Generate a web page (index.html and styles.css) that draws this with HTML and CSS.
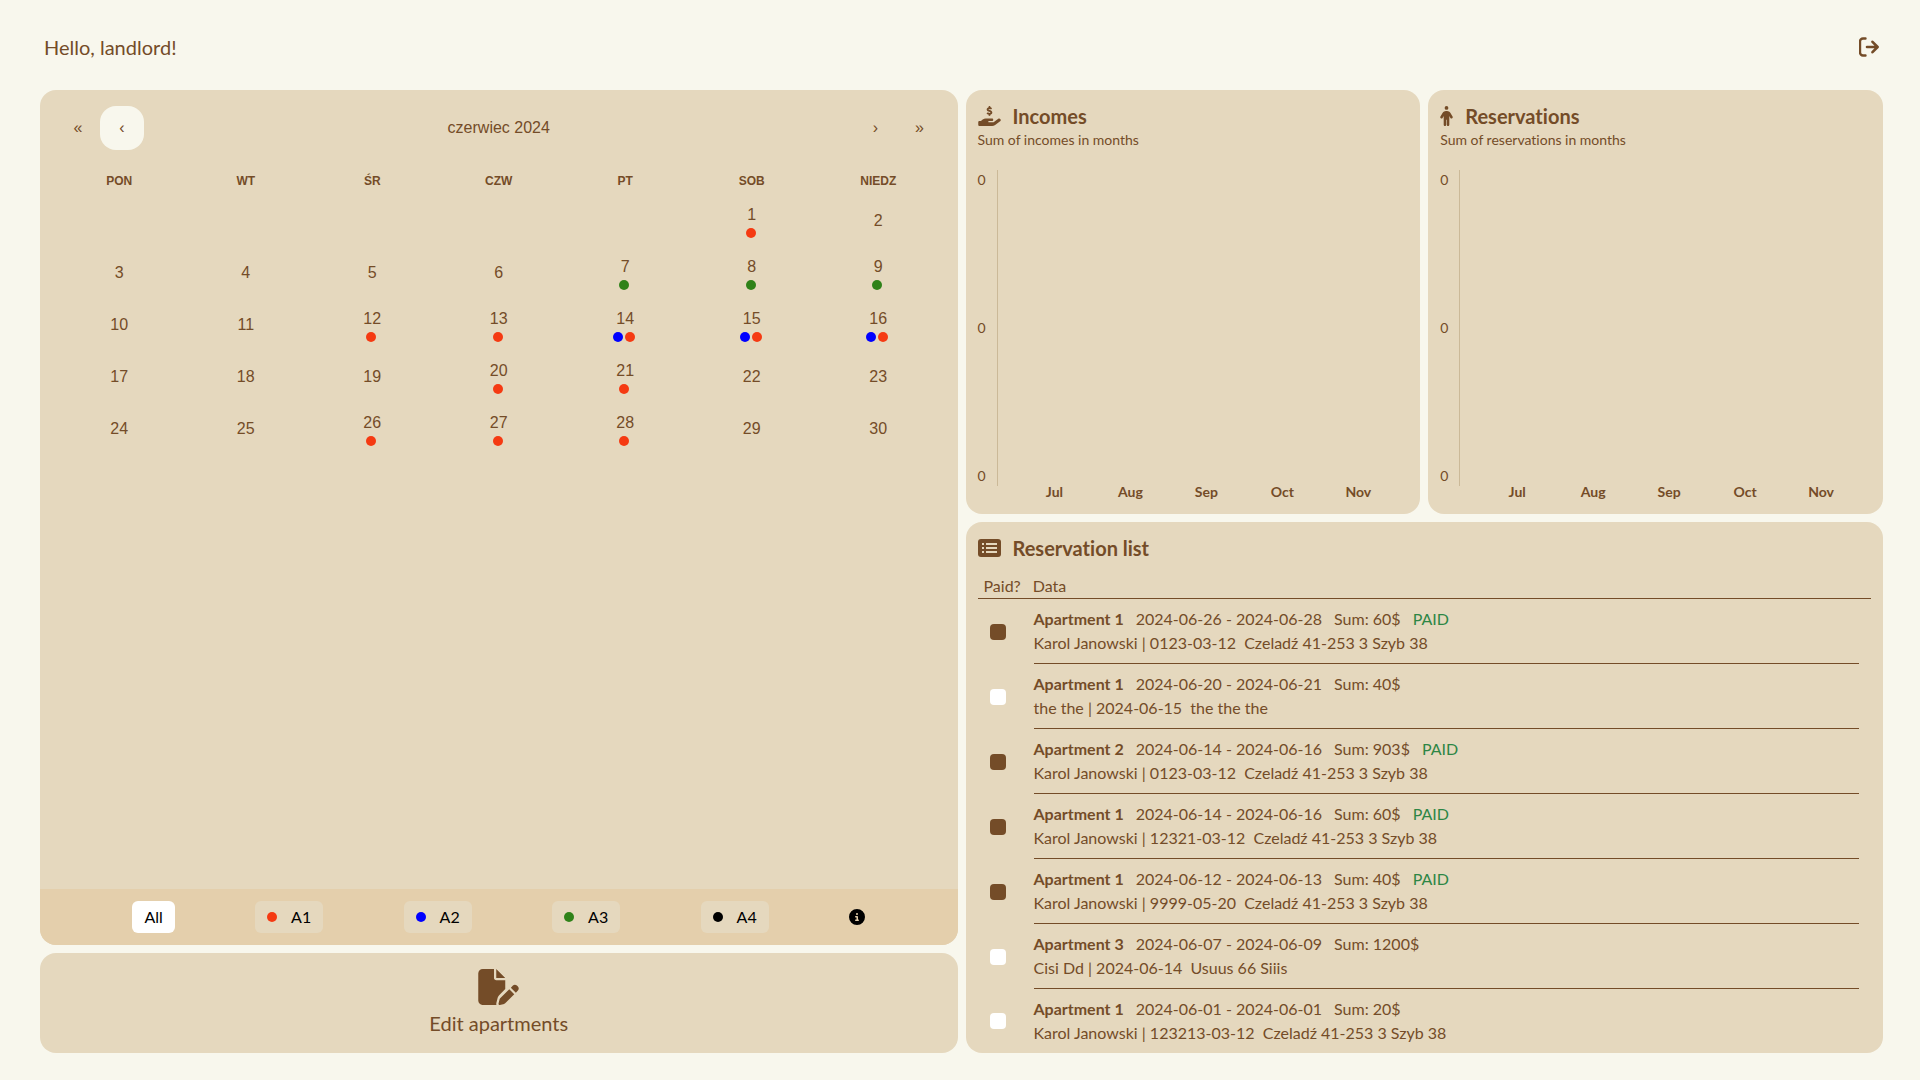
FILE: index.html
```html
<!DOCTYPE html>
<html lang="pl">
<head>
<meta charset="utf-8">
<meta name="viewport" content="width=device-width, initial-scale=1">
<title>Landlord panel</title>
<link rel="stylesheet" href="styles.css">
</head>
<body>
<header class="topbar">
  <h1 class="greeting">Hello, landlord!</h1>
  <button class="icon-button" type="button" aria-label="Log out">
    <svg class="icon-logout" viewBox="0 0 20 20" fill="none" stroke="currentColor" stroke-linecap="round" stroke-linejoin="round"><path stroke-width="2.400" d="M6.500 1.500H4a3 3 0 0 0-3 3v11a3 3 0 0 0 3 3h2.500"/><path stroke-width="2.6" d="M8 10h10.500M13.500 4.800 18.600 10l-5.100 5.200"/></svg>
  </button>
</header>
<main class="dashboard">
  <div class="column column-left">
    <section class="card calendar-card">
      <div class="calendar">
        <div class="calendar-nav">
          <button type="button" class="nav-button">«</button>
          <button type="button" class="nav-button nav-active">‹</button>
          <button type="button" class="nav-label">czerwiec 2024</button>
          <button type="button" class="nav-button">›</button>
          <button type="button" class="nav-button">»</button>
        </div>
        <table class="month">
          <thead><tr><th>pon</th><th>wt</th><th>śr</th><th>czw</th><th>pt</th><th>sob</th><th>niedz</th></tr></thead>
          <tbody>
            <tr><td></td><td></td><td></td><td></td><td></td><td>1<span class="dots"><i class="dot red"></i></span></td><td>2</td></tr>
            <tr><td>3</td><td>4</td><td>5</td><td>6</td><td>7<span class="dots"><i class="dot green"></i></span></td><td>8<span class="dots"><i class="dot green"></i></span></td><td>9<span class="dots"><i class="dot green"></i></span></td></tr>
            <tr><td>10</td><td>11</td><td>12<span class="dots"><i class="dot red"></i></span></td><td>13<span class="dots"><i class="dot red"></i></span></td><td>14<span class="dots"><i class="dot blue"></i><i class="dot red"></i></span></td><td>15<span class="dots"><i class="dot blue"></i><i class="dot red"></i></span></td><td>16<span class="dots"><i class="dot blue"></i><i class="dot red"></i></span></td></tr>
            <tr><td>17</td><td>18</td><td>19</td><td>20<span class="dots"><i class="dot red"></i></span></td><td>21<span class="dots"><i class="dot red"></i></span></td><td>22</td><td>23</td></tr>
            <tr><td>24</td><td>25</td><td>26<span class="dots"><i class="dot red"></i></span></td><td>27<span class="dots"><i class="dot red"></i></span></td><td>28<span class="dots"><i class="dot red"></i></span></td><td>29</td><td>30</td></tr>
          </tbody>
        </table>
      </div>
      <div class="filters">
        <button type="button" class="filter filter-on">All</button>
        <button type="button" class="filter"><i class="dot red"></i>A1</button>
        <button type="button" class="filter"><i class="dot blue"></i>A2</button>
        <button type="button" class="filter"><i class="dot green"></i>A3</button>
        <button type="button" class="filter"><i class="dot black"></i>A4</button>
        <button type="button" class="icon-button info" aria-label="Information">
          <svg class="icon-info" viewBox="0 0 512 512" fill="currentColor"><path d="M256 512A256 256 0 1 0 256 0a256 256 0 1 0 0 512zM216 336h24V272H216c-13.300 0-24-10.700-24-24s10.700-24 24-24h48c13.300 0 24 10.700 24 24v88h8c13.300 0 24 10.700 24 24s-10.700 24-24 24H216c-13.300 0-24-10.700-24-24s10.700-24 24-24zm40-208a32 32 0 1 1 0 64 32 32 0 1 1 0-64z"/></svg>
        </button>
      </div>
    </section>
    <button type="button" class="card edit">
      <svg class="icon-edit" viewBox="0 0 576 512" fill="currentColor"><path d="M0 64C0 28.700 28.700 0 64 0H224V128c0 17.700 14.300 32 32 32H384V285.700l-86.800 86.800c-10.300 10.300-17.500 23.100-21 37.200l-18.700 74.900c-2.300 9.200-1.800 18.800 1.300 27.500H64c-35.300 0-64-28.700-64-64V64zm384 64H256V0L384 128zM549.800 235.700l14.400 14.400c15.600 15.600 15.600 40.900 0 56.600l-29.400 29.400-71-71 29.400-29.400c15.600-15.600 40.900-15.600 56.600 0zM311.900 417L441.100 287.800l71 71L382.900 487.900c-4.100 4.100-9.200 7-14.900 8.400l-60.100 15c-5.500 1.400-11.200-.2-15.200-4.200s-5.600-9.700-4.200-15.200l15-60.100c1.400-5.600 4.300-10.800 8.400-14.900z"/></svg>
      <span>Edit apartments</span>
    </button>
  </div>
  <div class="column column-right">
    <div class="charts">
      <section class="card panel">
        <h2 class="title"><svg class="icon-hand" viewBox="0 0 576 512" fill="currentColor"><path d="M312 24V34.500c6.400 1.200 12.600 2.700 18.200 4.200c12.800 3.400 20.400 16.600 17 29.400s-16.600 20.400-29.400 17c-10.900-2.900-21.100-4.900-30.200-5c-7.300-.1-14.700 1.700-19.400 4.400c-2.100 1.300-3.100 2.400-3.500 3c-.3 .5-.7 1.200-.7 2.800c0 .3 0 .5 0 .6c.2 .2 .9 1.200 3.300 2.600c5.800 3.500 14.400 6.200 27.400 10.100l.9 .3c11.100 3.300 25.900 7.800 37.900 15.300c13.700 8.600 26.100 22.900 26.400 44.900c.3 22.500-11.400 38.900-26.700 48.500c-6.700 4.100-13.900 7-21.300 8.800V232c0 13.300-10.700 24-24 24s-24-10.700-24-24V220.600c-9.500-2.300-18.200-5.300-25.600-7.800c-2.100-.7-4.100-1.400-6-2c-12.600-4.200-19.400-17.800-15.200-30.400s17.800-19.400 30.400-15.200c2.600 .9 5 1.700 7.300 2.500c13.600 4.600 23.400 7.900 33.900 8.300c8 .3 15.100-1.600 19.200-4.100c1.900-1.200 2.800-2.200 3.200-2.900c.4-.6 .9-1.800 .8-4.100l0-.2c0-1 0-2.100-4-4.600c-5.700-3.600-14.300-6.400-27.100-10.300l-1.900-.6c-10.800-3.200-25-7.500-36.400-14.400c-13.500-8.100-26.500-22-26.600-44.100c-.1-22.900 12.900-38.600 27.700-47.400c6.400-3.800 13.300-6.400 20.200-8.200V24c0-13.300 10.700-24 24-24s24 10.700 24 24zM568.200 336.300c13.100 17.800 9.300 42.800-8.500 55.900L433.100 485.500c-23.400 17.200-51.600 26.500-80.700 26.500H192 32c-17.700 0-32-14.300-32-32V416c0-17.700 14.300-32 32-32H68.800l44.900-36c22.700-18.200 50.900-28 80-28H272h16 64c17.700 0 32 14.300 32 32s-14.300 32-32 32H288 272c-8.800 0-16 7.200-16 16s7.200 16 16 16H392.600l119.700-88.200c17.800-13.100 42.800-9.300 55.900 8.500z"/></svg>Incomes</h2>
        <p class="subtitle">Sum of incomes in months</p>
        <div class="chart">
          <div class="y-axis"><span>0</span><span>0</span><span>0</span></div>
          <div class="plot"></div>
          <div class="x-axis"><span>Jul</span><span>Aug</span><span>Sep</span><span>Oct</span><span>Nov</span></div>
        </div>
      </section>
      <section class="card panel">
        <h2 class="title"><svg class="icon-person" viewBox="0 0 320 512" fill="currentColor"><path d="M112 48a48 48 0 1 1 96 0 48 48 0 1 1-96 0zm40 304V480c0 17.700-14.300 32-32 32s-32-14.300-32-32V256.900L59.400 304.500c-9.100 15.100-28.800 20-43.900 10.900s-20-28.800-10.900-43.900l58.300-97c17.400-28.900 48.600-46.600 82.300-46.600h29.700c33.700 0 64.900 17.700 82.300 46.600l58.300 97c9.100 15.100 4.200 34.800-10.900 43.900s-34.800 4.200-43.900-10.900L232 256.900V480c0 17.700-14.300 32-32 32s-32-14.300-32-32V352H152z"/></svg>Reservations</h2>
        <p class="subtitle">Sum of reservations in months</p>
        <div class="chart">
          <div class="y-axis"><span>0</span><span>0</span><span>0</span></div>
          <div class="plot"></div>
          <div class="x-axis"><span>Jul</span><span>Aug</span><span>Sep</span><span>Oct</span><span>Nov</span></div>
        </div>
      </section>
    </div>
    <section class="card panel">
      <h2 class="title"><svg class="icon-list" viewBox="0 0 23 18" fill="none"><rect width="23" height="18" rx="3" fill="currentColor"/><path class="icon-lines" stroke-width="2" d="M4 5h2M8 5h11M4 9h2M8 9h11M4 13h2M8 13h11"/></svg>Reservation list</h2>
      <div class="list-head"><span>Paid?</span><span>Data</span></div>
      <ul class="list">
        <li><input type="checkbox" id="r1" checked><label for="r1"><span class="line"><b>Apartment 1</b><span>2024-06-26 - 2024-06-28</span><span>Sum: 60$</span><span class="paid">PAID</span></span><span class="line">Karol Janowski | 0123-03-12&nbsp; Czeladź 41-253 3 Szyb 38</span></label></li>
        <li><input type="checkbox" id="r2"><label for="r2"><span class="line"><b>Apartment 1</b><span>2024-06-20 - 2024-06-21</span><span>Sum: 40$</span></span><span class="line">the the | 2024-06-15&nbsp; the the the</span></label></li>
        <li><input type="checkbox" id="r3" checked><label for="r3"><span class="line"><b>Apartment 2</b><span>2024-06-14 - 2024-06-16</span><span>Sum: 903$</span><span class="paid">PAID</span></span><span class="line">Karol Janowski | 0123-03-12&nbsp; Czeladź 41-253 3 Szyb 38</span></label></li>
        <li><input type="checkbox" id="r4" checked><label for="r4"><span class="line"><b>Apartment 1</b><span>2024-06-14 - 2024-06-16</span><span>Sum: 60$</span><span class="paid">PAID</span></span><span class="line">Karol Janowski | 12321-03-12&nbsp; Czeladź 41-253 3 Szyb 38</span></label></li>
        <li><input type="checkbox" id="r5" checked><label for="r5"><span class="line"><b>Apartment 1</b><span>2024-06-12 - 2024-06-13</span><span>Sum: 40$</span><span class="paid">PAID</span></span><span class="line">Karol Janowski | 9999-05-20&nbsp; Czeladź 41-253 3 Szyb 38</span></label></li>
        <li><input type="checkbox" id="r6"><label for="r6"><span class="line"><b>Apartment 3</b><span>2024-06-07 - 2024-06-09</span><span>Sum: 1200$</span></span><span class="line">Cisi Dd | 2024-06-14&nbsp; Usuus 66 Siiis</span></label></li>
        <li><input type="checkbox" id="r7"><label for="r7"><span class="line"><b>Apartment 1</b><span>2024-06-01 - 2024-06-01</span><span>Sum: 20$</span></span><span class="line">Karol Janowski | 123213-03-12&nbsp; Czeladź 41-253 3 Szyb 38</span></label></li>
      </ul>
    </section>
  </div>
</main>
</body>
</html>
```
FILE: styles.css
```css
:root {
  --brown: #744c28;
  --sand: #e5d8be;
  --cream: #f8f7ed;
}

* {
  box-sizing: border-box;
}

body {
  display: flex;
  flex-direction: column;
  height: 100vh;
  margin: 0;
  padding: 0 37px 27px 40px;
  background: var(--cream);
  color: var(--brown);
  font: 16px/24px Lato, sans-serif;
  font-variant-ligatures: none;
}

button {
  border: 0;
  padding: 0;
  background: none;
  color: inherit;
  font: inherit;
  cursor: pointer;
}

svg {
  display: block;
  flex: none;
}

.topbar {
  display: flex;
  flex: none;
  align-items: center;
  justify-content: space-between;
  height: 90px;
  padding: 4px 4px 0 4px;
}

.greeting {
  margin: 0;
  font-size: 20px;
  font-weight: 400;
}

.icon-logout {
  width: 20px;
  height: 20px;
}

.dashboard {
  display: grid;
  flex: 1;
  grid-template-columns: 1fr 1fr;
  gap: 8px;
  min-height: 0;
}

.column {
  display: grid;
  gap: 8px;
  min-height: 0;
}

.column-left {
  grid-template-rows: 1fr 100px;
}

.column-right {
  grid-template-rows: 424px 1fr;
}

.card {
  border-radius: 16px;
  background: var(--sand);
  overflow: hidden;
}

.calendar-card {
  display: flex;
  flex-direction: column;
  justify-content: space-between;
}

.calendar {
  padding: 16px;
  font-family: "Liberation Sans", sans-serif;
}

.calendar-nav {
  display: flex;
  height: 44px;
  margin-bottom: 16px;
}

.nav-button {
  width: 44px;
  border-radius: 16px;
}

.nav-active {
  background: var(--cream);
}

.nav-label {
  flex: 1;
}

.month {
  width: 100%;
  table-layout: fixed;
  border-collapse: collapse;
}

.month th {
  height: 29px;
  padding: 0;
  font-size: 12px;
  line-height: 20px;
  text-transform: uppercase;
}

.month td {
  height: 52px;
  padding: 0;
  line-height: 22px;
  text-align: center;
  vertical-align: middle;
}

.dots {
  display: flex;
  justify-content: center;
  margin-top: 2px;
}

.dot {
  width: 10px;
  height: 10px;
  border-radius: 50%;
}

.dots .dot {
  margin-right: 2px;
}

.red { background: #f53a12; }
.green { background: #2f8219; }
.blue { background: #0000ff; }
.black { background: #000000; }

.filters {
  display: flex;
  align-items: center;
  justify-content: space-evenly;
  height: 56px;
  padding: 0 12px;
  background: #e4cfac;
  color: #000000;
}

.filter {
  display: flex;
  align-items: center;
  gap: 14px;
  height: 32px;
  padding: 0 12px;
  border-radius: 6px;
  background: var(--sand);
}

.filter-on {
  background: #ffffff;
}

.icon-info {
  width: 16px;
  height: 16px;
}

.edit {
  display: flex;
  flex-direction: column;
  align-items: center;
  gap: 6px;
  padding: 16px;
  font-size: 20px;
}

.icon-edit {
  width: 41px;
  height: 36px;
}

.charts {
  display: grid;
  grid-template-columns: 1fr 1fr;
  gap: 8px;
}

.panel {
  display: flex;
  flex-direction: column;
  padding: 12px;
}

.title {
  display: flex;
  flex: none;
  align-items: center;
  gap: 12px;
  height: 28px;
  margin: 0;
  font-size: 20px;
  font-weight: 700;
}

.icon-hand {
  width: 23px;
  height: 20px;
}

.icon-person {
  width: 13px;
  height: 20px;
}

.icon-list {
  width: 23px;
  height: 18px;
}

.icon-lines {
  stroke: var(--sand);
}

.subtitle {
  margin: 0 0 20px;
  font-size: 14px;
  line-height: 20px;
}

.chart {
  display: grid;
  flex: 1;
  grid-template-columns: 19px 1fr;
  grid-template-rows: 316px auto;
}

.y-axis {
  display: flex;
  flex-direction: column;
  justify-content: space-between;
  font-size: 14px;
  line-height: 20px;
}

.plot {
  border-left: 1px solid #cbb998;
}

.x-axis {
  display: grid;
  grid-column: 2;
  grid-template-columns: repeat(5, 1fr);
  padding: 0 12px 0 20px;
  font-size: 14px;
  font-weight: 700;
  line-height: 12px;
  text-align: center;
}

.list-head {
  display: flex;
  flex: none;
  gap: 12px;
  margin-top: 10px;
  padding: 2px 6px 0;
  border-bottom: 1px solid var(--brown);
}

.list {
  margin: 0;
  padding: 0 12px;
  list-style: none;
}

.list li {
  display: flex;
  align-items: center;
  gap: 28px;
}

.list input {
  flex: none;
  width: 16px;
  height: 16px;
  margin: 0;
  border-radius: 4px;
  background: #ffffff;
  appearance: none;
}

.list input:checked {
  background: var(--brown);
}

.list label {
  flex: 1;
  padding: 8px 0;
  border-bottom: 1px solid var(--brown);
}

.list li:last-child label {
  border-bottom: 0;
}

.line {
  display: flex;
  gap: 12px;
  white-space: pre;
}

.paid {
  color: #2d8645;
}
```
